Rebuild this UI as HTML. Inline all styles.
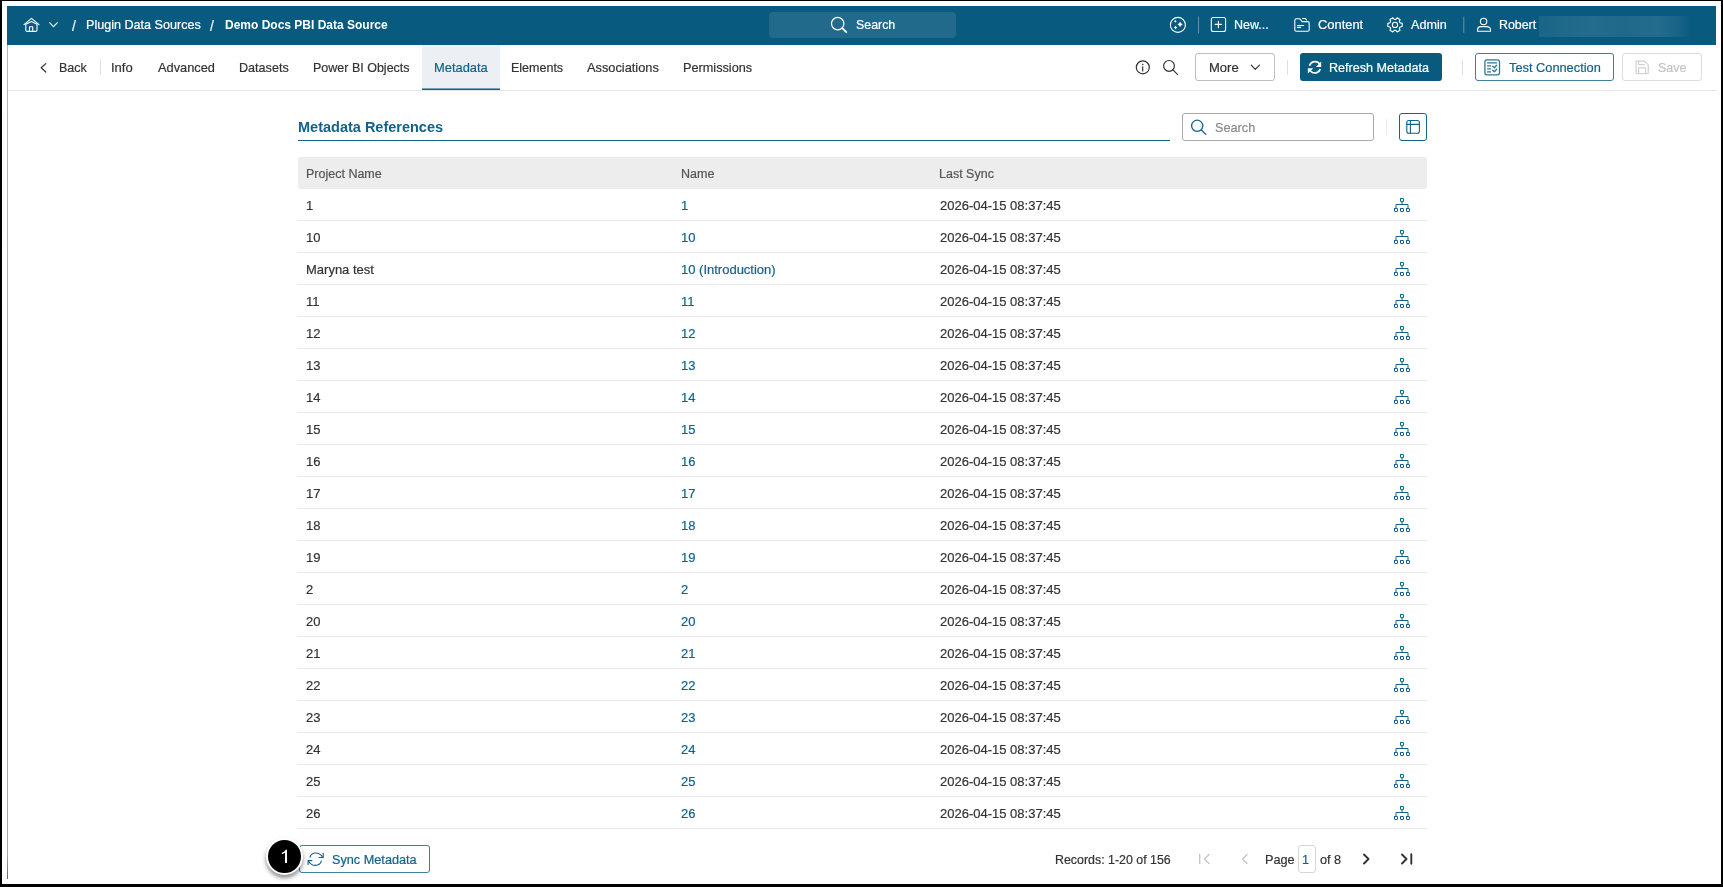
<!DOCTYPE html>
<html><head><meta charset="utf-8">
<style>
*{box-sizing:border-box;margin:0;padding:0}
html,body{width:1723px;height:887px;overflow:hidden;background:#000}
body{font-family:"Liberation Sans",sans-serif;color:#333;position:relative}
.a{position:absolute;white-space:nowrap;line-height:1;will-change:transform;-webkit-text-stroke:0.2px currentColor}
.b{position:absolute}
#frame{position:absolute;left:2px;top:1px;width:1719px;height:883px;background:#fff}
#hdr{position:absolute;left:7px;top:6px;width:1709px;height:39px;background:#095a7f}
#lline{position:absolute;left:7px;top:45px;width:1px;height:834px;background:linear-gradient(#b4b4b4,#a8a8a8 97%,#666)}
#ov{position:absolute;left:0;top:0}
</style></head>
<body>
<div id="frame"></div>
<div id="hdr"></div>
<div id="lline"></div>
<div class="b" style="left:769px;top:12px;width:187px;height:26px;border-radius:4px;background:rgba(255,255,255,0.1)"></div>
<div class="b" style="left:1539px;top:16px;width:152px;height:21px;background:linear-gradient(90deg,rgba(255,255,255,0.07),rgba(255,255,255,0.11) 35%,rgba(255,255,255,0.09) 55%,rgba(255,255,255,0.11) 78%,rgba(255,255,255,0.06) 92%,rgba(255,255,255,0) 100%)"></div>
<div class="a" style="left:72px;top:19px;font-size:14px;color:rgba(255,255,255,0.92);font-weight:400;">/</div>
<div class="a" style="left:86px;top:19px;font-size:12.6px;color:#fff;font-weight:400;">Plugin Data Sources</div>
<div class="a" style="left:210px;top:19px;font-size:14px;color:rgba(255,255,255,0.92);font-weight:400;">/</div>
<div class="a" style="left:225px;top:19px;font-size:12px;color:#fff;font-weight:700;-webkit-text-stroke:0;">Demo Docs PBI Data Source</div>
<div class="a" style="left:856px;top:19px;font-size:12.4px;color:#fff;font-weight:400;">Search</div>
<div class="a" style="left:1234px;top:19px;font-size:12.5px;color:#fff;font-weight:400;">New...</div>
<div class="a" style="left:1318px;top:19px;font-size:12.9px;color:#fff;font-weight:400;">Content</div>
<div class="a" style="left:1411px;top:19px;font-size:12.6px;color:#fff;font-weight:400;">Admin</div>
<div class="a" style="left:1499px;top:19px;font-size:12.4px;color:#fff;font-weight:400;">Robert</div>
<div class="b" style="left:8px;top:90px;width:1708px;height:1px;background:#e4e4e4"></div>
<div class="b" style="left:422px;top:45px;width:78px;height:45px;background:#ecf0f4"></div>
<div class="b" style="left:422px;top:89px;width:78px;height:1px;background:#12628a"></div>
<div class="b" style="left:422px;top:88px;width:78px;height:1px;background:rgba(18,98,138,0.55)"></div>
<div class="b" style="left:100px;top:59px;width:1px;height:16px;background:#e0e0e0"></div>
<div class="a" style="left:59px;top:62px;font-size:12.5px;color:#333;font-weight:400;">Back</div>
<div class="a" style="left:111px;top:61px;font-size:13px;color:#333;font-weight:400;">Info</div>
<div class="a" style="left:158px;top:62px;font-size:12.8px;color:#333;font-weight:400;">Advanced</div>
<div class="a" style="left:239px;top:62px;font-size:12.6px;color:#333;font-weight:400;">Datasets</div>
<div class="a" style="left:313px;top:62px;font-size:12.5px;color:#333;font-weight:400;">Power BI Objects</div>
<div class="a" style="left:434px;top:62px;font-size:12.9px;color:#12628a;font-weight:400;">Metadata</div>
<div class="a" style="left:511px;top:62px;font-size:12.5px;color:#333;font-weight:400;">Elements</div>
<div class="a" style="left:587px;top:62px;font-size:12.8px;color:#333;font-weight:400;">Associations</div>
<div class="a" style="left:683px;top:62px;font-size:12.7px;color:#333;font-weight:400;">Permissions</div>
<div class="b" style="left:1195px;top:53px;width:80px;height:28px;border:1px solid #bdbdbd;border-radius:3px"></div>
<div class="a" style="left:1209px;top:61px;font-size:13px;color:#333;font-weight:400;">More</div>
<div class="b" style="left:1287px;top:60px;width:1px;height:15px;background:#e0e0e0"></div>
<div class="b" style="left:1300px;top:53px;width:142px;height:28px;background:#095a7f;border-radius:3px"></div>
<div class="a" style="left:1329px;top:62px;font-size:12.6px;color:#fff;font-weight:400;">Refresh Metadata</div>
<div class="b" style="left:1462px;top:60px;width:1px;height:15px;background:#e0e0e0"></div>
<div class="b" style="left:1475px;top:53px;width:139px;height:28px;border:1px solid #3d7f9e;border-radius:3px"></div>
<div class="a" style="left:1509px;top:62px;font-size:12.8px;color:#12628a;font-weight:400;">Test Connection</div>
<div class="b" style="left:1622px;top:53px;width:80px;height:28px;border:1px solid #dcdcdc;border-radius:3px"></div>
<div class="a" style="left:1658px;top:62px;font-size:12.5px;color:#c4c4c4;font-weight:400;">Save</div>
<div class="a" style="left:298px;top:120px;font-size:14.5px;color:#12628a;font-weight:700;-webkit-text-stroke:0;">Metadata References</div>
<div class="b" style="left:298px;top:139.5px;width:872px;height:1.5px;background:#12628a"></div>
<div class="b" style="left:1182px;top:113px;width:192px;height:28px;border:1px solid #a9a9a9;border-radius:3px"></div>
<div class="a" style="left:1215px;top:122px;font-size:12.7px;color:#8a8a8a;font-weight:400;">Search</div>
<div class="b" style="left:1386px;top:119px;width:1px;height:16px;background:#ececec"></div>
<div class="b" style="left:1399px;top:113px;width:28px;height:28px;border:1px solid #12628a;border-radius:3px"></div>
<div class="b" style="left:298px;top:157px;width:1129px;height:32px;background:#ededed;border-radius:3px"></div>
<div class="a" style="left:306px;top:168px;font-size:12.5px;color:#555;font-weight:400;">Project Name</div>
<div class="a" style="left:681px;top:168px;font-size:12.5px;color:#555;font-weight:400;">Name</div>
<div class="a" style="left:939px;top:168px;font-size:12.5px;color:#555;font-weight:400;">Last Sync</div>
<div class="b" style="left:298px;top:220px;width:1129px;height:1px;background:#e8e8e8"></div>
<div class="a" style="left:306px;top:199px;font-size:13px;color:#333;font-weight:400;">1</div>
<div class="a" style="left:681px;top:199px;font-size:13px;color:#12628a;font-weight:400;">1</div>
<div class="a" style="left:940px;top:199px;font-size:13px;color:#333;font-weight:400;">2026-04-15 08:37:45</div>
<div class="b" style="left:298px;top:252px;width:1129px;height:1px;background:#e8e8e8"></div>
<div class="a" style="left:306px;top:231px;font-size:13px;color:#333;font-weight:400;">10</div>
<div class="a" style="left:681px;top:231px;font-size:13px;color:#12628a;font-weight:400;">10</div>
<div class="a" style="left:940px;top:231px;font-size:13px;color:#333;font-weight:400;">2026-04-15 08:37:45</div>
<div class="b" style="left:298px;top:284px;width:1129px;height:1px;background:#e8e8e8"></div>
<div class="a" style="left:306px;top:263px;font-size:13px;color:#333;font-weight:400;">Maryna test</div>
<div class="a" style="left:681px;top:263px;font-size:13px;color:#12628a;font-weight:400;">10 (Introduction)</div>
<div class="a" style="left:940px;top:263px;font-size:13px;color:#333;font-weight:400;">2026-04-15 08:37:45</div>
<div class="b" style="left:298px;top:316px;width:1129px;height:1px;background:#e8e8e8"></div>
<div class="a" style="left:306px;top:295px;font-size:13px;color:#333;font-weight:400;">11</div>
<div class="a" style="left:681px;top:295px;font-size:13px;color:#12628a;font-weight:400;">11</div>
<div class="a" style="left:940px;top:295px;font-size:13px;color:#333;font-weight:400;">2026-04-15 08:37:45</div>
<div class="b" style="left:298px;top:348px;width:1129px;height:1px;background:#e8e8e8"></div>
<div class="a" style="left:306px;top:327px;font-size:13px;color:#333;font-weight:400;">12</div>
<div class="a" style="left:681px;top:327px;font-size:13px;color:#12628a;font-weight:400;">12</div>
<div class="a" style="left:940px;top:327px;font-size:13px;color:#333;font-weight:400;">2026-04-15 08:37:45</div>
<div class="b" style="left:298px;top:380px;width:1129px;height:1px;background:#e8e8e8"></div>
<div class="a" style="left:306px;top:359px;font-size:13px;color:#333;font-weight:400;">13</div>
<div class="a" style="left:681px;top:359px;font-size:13px;color:#12628a;font-weight:400;">13</div>
<div class="a" style="left:940px;top:359px;font-size:13px;color:#333;font-weight:400;">2026-04-15 08:37:45</div>
<div class="b" style="left:298px;top:412px;width:1129px;height:1px;background:#e8e8e8"></div>
<div class="a" style="left:306px;top:391px;font-size:13px;color:#333;font-weight:400;">14</div>
<div class="a" style="left:681px;top:391px;font-size:13px;color:#12628a;font-weight:400;">14</div>
<div class="a" style="left:940px;top:391px;font-size:13px;color:#333;font-weight:400;">2026-04-15 08:37:45</div>
<div class="b" style="left:298px;top:444px;width:1129px;height:1px;background:#e8e8e8"></div>
<div class="a" style="left:306px;top:423px;font-size:13px;color:#333;font-weight:400;">15</div>
<div class="a" style="left:681px;top:423px;font-size:13px;color:#12628a;font-weight:400;">15</div>
<div class="a" style="left:940px;top:423px;font-size:13px;color:#333;font-weight:400;">2026-04-15 08:37:45</div>
<div class="b" style="left:298px;top:476px;width:1129px;height:1px;background:#e8e8e8"></div>
<div class="a" style="left:306px;top:455px;font-size:13px;color:#333;font-weight:400;">16</div>
<div class="a" style="left:681px;top:455px;font-size:13px;color:#12628a;font-weight:400;">16</div>
<div class="a" style="left:940px;top:455px;font-size:13px;color:#333;font-weight:400;">2026-04-15 08:37:45</div>
<div class="b" style="left:298px;top:508px;width:1129px;height:1px;background:#e8e8e8"></div>
<div class="a" style="left:306px;top:487px;font-size:13px;color:#333;font-weight:400;">17</div>
<div class="a" style="left:681px;top:487px;font-size:13px;color:#12628a;font-weight:400;">17</div>
<div class="a" style="left:940px;top:487px;font-size:13px;color:#333;font-weight:400;">2026-04-15 08:37:45</div>
<div class="b" style="left:298px;top:540px;width:1129px;height:1px;background:#e8e8e8"></div>
<div class="a" style="left:306px;top:519px;font-size:13px;color:#333;font-weight:400;">18</div>
<div class="a" style="left:681px;top:519px;font-size:13px;color:#12628a;font-weight:400;">18</div>
<div class="a" style="left:940px;top:519px;font-size:13px;color:#333;font-weight:400;">2026-04-15 08:37:45</div>
<div class="b" style="left:298px;top:572px;width:1129px;height:1px;background:#e8e8e8"></div>
<div class="a" style="left:306px;top:551px;font-size:13px;color:#333;font-weight:400;">19</div>
<div class="a" style="left:681px;top:551px;font-size:13px;color:#12628a;font-weight:400;">19</div>
<div class="a" style="left:940px;top:551px;font-size:13px;color:#333;font-weight:400;">2026-04-15 08:37:45</div>
<div class="b" style="left:298px;top:604px;width:1129px;height:1px;background:#e8e8e8"></div>
<div class="a" style="left:306px;top:583px;font-size:13px;color:#333;font-weight:400;">2</div>
<div class="a" style="left:681px;top:583px;font-size:13px;color:#12628a;font-weight:400;">2</div>
<div class="a" style="left:940px;top:583px;font-size:13px;color:#333;font-weight:400;">2026-04-15 08:37:45</div>
<div class="b" style="left:298px;top:636px;width:1129px;height:1px;background:#e8e8e8"></div>
<div class="a" style="left:306px;top:615px;font-size:13px;color:#333;font-weight:400;">20</div>
<div class="a" style="left:681px;top:615px;font-size:13px;color:#12628a;font-weight:400;">20</div>
<div class="a" style="left:940px;top:615px;font-size:13px;color:#333;font-weight:400;">2026-04-15 08:37:45</div>
<div class="b" style="left:298px;top:668px;width:1129px;height:1px;background:#e8e8e8"></div>
<div class="a" style="left:306px;top:647px;font-size:13px;color:#333;font-weight:400;">21</div>
<div class="a" style="left:681px;top:647px;font-size:13px;color:#12628a;font-weight:400;">21</div>
<div class="a" style="left:940px;top:647px;font-size:13px;color:#333;font-weight:400;">2026-04-15 08:37:45</div>
<div class="b" style="left:298px;top:700px;width:1129px;height:1px;background:#e8e8e8"></div>
<div class="a" style="left:306px;top:679px;font-size:13px;color:#333;font-weight:400;">22</div>
<div class="a" style="left:681px;top:679px;font-size:13px;color:#12628a;font-weight:400;">22</div>
<div class="a" style="left:940px;top:679px;font-size:13px;color:#333;font-weight:400;">2026-04-15 08:37:45</div>
<div class="b" style="left:298px;top:732px;width:1129px;height:1px;background:#e8e8e8"></div>
<div class="a" style="left:306px;top:711px;font-size:13px;color:#333;font-weight:400;">23</div>
<div class="a" style="left:681px;top:711px;font-size:13px;color:#12628a;font-weight:400;">23</div>
<div class="a" style="left:940px;top:711px;font-size:13px;color:#333;font-weight:400;">2026-04-15 08:37:45</div>
<div class="b" style="left:298px;top:764px;width:1129px;height:1px;background:#e8e8e8"></div>
<div class="a" style="left:306px;top:743px;font-size:13px;color:#333;font-weight:400;">24</div>
<div class="a" style="left:681px;top:743px;font-size:13px;color:#12628a;font-weight:400;">24</div>
<div class="a" style="left:940px;top:743px;font-size:13px;color:#333;font-weight:400;">2026-04-15 08:37:45</div>
<div class="b" style="left:298px;top:796px;width:1129px;height:1px;background:#e8e8e8"></div>
<div class="a" style="left:306px;top:775px;font-size:13px;color:#333;font-weight:400;">25</div>
<div class="a" style="left:681px;top:775px;font-size:13px;color:#12628a;font-weight:400;">25</div>
<div class="a" style="left:940px;top:775px;font-size:13px;color:#333;font-weight:400;">2026-04-15 08:37:45</div>
<div class="b" style="left:298px;top:828px;width:1129px;height:1px;background:#e8e8e8"></div>
<div class="a" style="left:306px;top:807px;font-size:13px;color:#333;font-weight:400;">26</div>
<div class="a" style="left:681px;top:807px;font-size:13px;color:#12628a;font-weight:400;">26</div>
<div class="a" style="left:940px;top:807px;font-size:13px;color:#333;font-weight:400;">2026-04-15 08:37:45</div>
<div class="b" style="left:299px;top:845px;width:131px;height:28px;border:1px solid #3d7f9e;border-radius:3px"></div>
<div class="a" style="left:332px;top:854px;font-size:12.7px;color:#12628a;font-weight:400;">Sync Metadata</div>
<div class="a" style="left:1055px;top:854px;font-size:12.4px;color:#333;font-weight:400;">Records: 1-20 of 156</div>
<div class="a" style="left:1265px;top:854px;font-size:12.7px;color:#333;font-weight:400;">Page</div>
<div class="b" style="left:1298px;top:845px;width:18px;height:28px;border:1px solid #d6d6d6;border-radius:3px"></div>
<div class="a" style="left:1302px;top:854px;font-size:12.7px;color:#12628a;font-weight:400;">1</div>
<div class="a" style="left:1320px;top:854px;font-size:12.7px;color:#333;font-weight:400;">of 8</div>
<div class="b" style="left:266px;top:838px;width:37px;height:37px;border-radius:50%;background:#000;border:2px solid #fff;box-shadow:0 3px 4px rgba(0,0,0,0.45)"></div>
<svg class="b" style="left:0;top:0" width="1723" height="887" fill="none"><path d="M286 850.8 V863.1" stroke="#fff" stroke-width="2"/><path d="M286.3 850.4 Q284.6 852.6 282.5 853.2" stroke="#fff" stroke-width="1.5" stroke-linecap="round"/></svg>
<svg id="ov" width="1723" height="887" viewBox="0 0 1723 887" fill="none" stroke-linecap="round" stroke-linejoin="round">
<defs><g id="hier" stroke="#12628a" stroke-width="1" fill="none" stroke-linejoin="miter"><rect x="6.5" y="0.5" width="3" height="3.2" rx="0.4"/><path d="M8 3.7 V6.5 M2 10 V6.5 H14 V10"/><rect x="0.5" y="10.5" width="3" height="3" rx="0.4"/><rect x="6.5" y="10.5" width="3" height="3" rx="0.4"/><rect x="12.5" y="10.5" width="3" height="3" rx="0.4"/></g></defs>
<g stroke="#fff" stroke-width="1.1"><path d="M24 24.6 L31.5 18.4 L39 24.6"/><path d="M25.8 24.2 V30 Q25.8 31.4 27.2 31.4 H35.6 Q37 31.4 37 30 V24.2 L31.5 21.4 Z"/><path d="M29.5 31.4 V26.7 H32.7 V31.4"/></g>
<path d="M49.6 22.6 L53.5 26.6 L57.4 22.6" stroke="#fff" stroke-width="1.1"/>
<g stroke="#fff" stroke-width="1.2"><circle cx="837.7" cy="23.6" r="6.2"/><path d="M842.3 28.2 L846.3 32.2" stroke-width="1.8"/></g>
<circle cx="1177.9" cy="24.9" r="7.5" stroke="#fff" stroke-width="1.1"/>
<path d="M1180.1 21.799999999999997 Q1180.828 23.671999999999997 1182.6999999999998 24.4 Q1180.828 25.128 1180.1 27.0 Q1179.3719999999998 25.128 1177.5 24.4 Q1179.3719999999998 23.671999999999997 1180.1 21.799999999999997 Z" fill="#fff"/>
<path d="M1175.3 19.8 Q1175.72 20.88 1176.8 21.3 Q1175.72 21.720000000000002 1175.3 22.8 Q1174.8799999999999 21.720000000000002 1173.8 21.3 Q1174.8799999999999 20.88 1175.3 19.8 Z" fill="#fff"/>
<path d="M1175.6 25.8 Q1176.1039999999998 27.096 1177.3999999999999 27.6 Q1176.1039999999998 28.104000000000003 1175.6 29.400000000000002 Q1175.096 28.104000000000003 1173.8 27.6 Q1175.096 27.096 1175.6 25.8 Z" fill="#fff"/>
<path d="M1198.5 17 V33" stroke="rgba(255,255,255,0.35)" stroke-width="1"/>
<g stroke="#fff" stroke-width="1.1"><rect x="1211.3" y="17.5" width="14.3" height="14" rx="2"/><path d="M1218.4 21.2 V27.7 M1215.2 24.4 H1221.6"/></g>
<g stroke="#fff" stroke-width="1.1"><path d="M1294.8 20.2 Q1294.8 18.8 1296.2 18.8 H1299.8 L1302.2 21.6 H1307.8 Q1309.2 21.6 1309.2 23 V29.8 Q1309.2 31.2 1307.8 31.2 H1296.2 Q1294.8 31.2 1294.8 29.8 Z"/><path d="M1302.6 18.5 H1305.3 L1306.5 19.8 M1297.4 25.5 H1303.6 M1297.4 27.4 H1300.7"/></g>
<g stroke="#fff" stroke-width="1.1"><path d="M1402.21 23.24 L1402.21 26.56 L1400.10 26.96 L1399.33 28.29 L1400.05 30.31 L1397.16 31.98 L1395.77 30.35 L1394.23 30.35 L1392.84 31.98 L1389.95 30.31 L1390.67 28.29 L1389.90 26.96 L1387.79 26.56 L1387.79 23.24 L1389.90 22.84 L1390.67 21.51 L1389.95 19.49 L1392.84 17.82 L1394.23 19.45 L1395.77 19.45 L1397.16 17.82 L1400.05 19.49 L1399.33 21.51 L1400.10 22.84 Z"/><circle cx="1395" cy="24.9" r="2.6"/></g>
<path d="M1463.8 17 V32.5" stroke="rgba(255,255,255,0.35)" stroke-width="1"/>
<g stroke="#fff" stroke-width="1.1"><circle cx="1483.6" cy="21.4" r="3.2"/><path d="M1477.6 31.3 V29.6 Q1477.6 26.6 1480.6 26.6 H1486.6 Q1490.5 26.6 1490.5 30 V31.3 Z"/></g>
<path d="M45.8 63.6 L41.2 67.8 L45.8 72" stroke="#333" stroke-width="1.2"/>
<g stroke="#333" stroke-width="1.2"><circle cx="1142.8" cy="67.3" r="6.5"/><path d="M1142.7 66.8 V70.9"/></g><circle cx="1142.7" cy="64.4" r="0.75" fill="#333"/>
<g stroke="#333" stroke-width="1.2"><circle cx="1169" cy="65.9" r="5.4"/><path d="M1173 69.9 L1177.4 74.3"/></g>
<path d="M1251.2 65.2 L1255.3 69.3 L1259.4 65.2" stroke="#333" stroke-width="1.2"/>
<g stroke="#fff" stroke-width="1.7" stroke-linecap="butt"><path d="M1309.6 65.8 A5.6 5.6 0 0 1 1319.8 64.2"/><path d="M1320.2 69 A5.6 5.6 0 0 1 1310.4 70.8"/></g><path d="M1321.2 61.6 V66.9 H1315.9 Z" fill="#fff"/><path d="M1307.9 73.5 V68.2 H1313.2 Z" fill="#fff"/>
<g stroke="#2f7597" stroke-width="1.3"><rect x="1484.9" y="59.8" width="14.6" height="15" rx="2"/><path d="M1487.6 62.9 H1496.6 M1487.6 65.9 H1490.6 M1487.6 68.9 H1490.6 M1487.6 71.9 H1490.6"/><path d="M1492.6 66.3 L1494.4 67.8 L1496.6 65.3 M1492.6 70.2 L1494.4 71.7 L1496.6 69.2"/></g>
<g stroke="#d2d2d2" stroke-width="1.2"><path d="M1636 61.2 H1644.6 L1648.3 64.9 V72.6 Q1648.3 73.6 1647.3 73.6 H1637 Q1636 73.6 1636 72.6 Z"/><path d="M1638.6 61.2 V64.6 H1644.4 M1638.6 73.6 V67.9 H1645.6 V73.6"/></g>
<g stroke="#12628a" stroke-width="1.1"><rect x="1406.8" y="120.5" width="12.6" height="12.8" rx="2"/><path d="M1406.8 124.4 H1419.4 M1410.4 120.5 V133.3"/></g>
<g stroke="#12628a" stroke-width="1.3"><circle cx="1197.2" cy="125.8" r="5.6"/><path d="M1201.4 130 L1205.8 134.4"/></g>
<use href="#hier" x="1394" y="198"/>
<use href="#hier" x="1394" y="230"/>
<use href="#hier" x="1394" y="262"/>
<use href="#hier" x="1394" y="294"/>
<use href="#hier" x="1394" y="326"/>
<use href="#hier" x="1394" y="358"/>
<use href="#hier" x="1394" y="390"/>
<use href="#hier" x="1394" y="422"/>
<use href="#hier" x="1394" y="454"/>
<use href="#hier" x="1394" y="486"/>
<use href="#hier" x="1394" y="518"/>
<use href="#hier" x="1394" y="550"/>
<use href="#hier" x="1394" y="582"/>
<use href="#hier" x="1394" y="614"/>
<use href="#hier" x="1394" y="646"/>
<use href="#hier" x="1394" y="678"/>
<use href="#hier" x="1394" y="710"/>
<use href="#hier" x="1394" y="742"/>
<use href="#hier" x="1394" y="774"/>
<use href="#hier" x="1394" y="806"/>
<g stroke="#12628a" stroke-width="1.15"><path d="M310.1 857 C311.6 851.8 319.2 851.4 322.7 857.2"/><path d="M321.3 861.1 C319.6 866.6 312.1 866.9 308.5 861.2"/><path d="M323.2 853.3 V857.5 H319.1 M311.9 860.6 H308.1 V864.6"/></g>
<g stroke="#c3c3c3" stroke-width="1.3"><path d="M1199.7 854.5 V863.5 M1209 854.5 L1204.5 859 L1209 863.5 M1247 854.5 L1242.5 859 L1247 863.5"/></g>
<g stroke="#333" stroke-width="1.9"><path d="M1364 854.5 L1368.5 859 L1364 863.5 M1402 854.5 L1406.5 859 L1402 863.5 M1411.3 854.2 V863.8"/></g>
</svg>
</body></html>
